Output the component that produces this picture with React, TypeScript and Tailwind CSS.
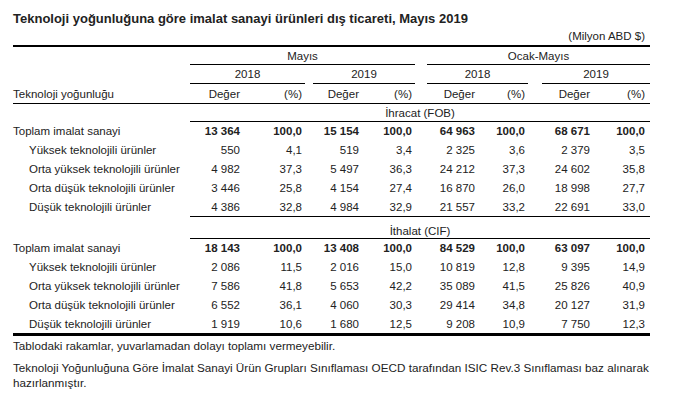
import React from "react";

type Row = { label: string; v: string[]; total?: boolean };

const ihracat: Row[] = [
  { label: "Toplam imalat sanayi", v: ["13 364", "100,0", "15 154", "100,0", "64 963", "100,0", "68 671", "100,0"], total: true },
  { label: "Yüksek teknolojili ürünler", v: ["550", "4,1", "519", "3,4", "2 325", "3,6", "2 379", "3,5"] },
  { label: "Orta yüksek teknolojili ürünler", v: ["4 982", "37,3", "5 497", "36,3", "24 212", "37,3", "24 602", "35,8"] },
  { label: "Orta düşük teknolojili ürünler", v: ["3 446", "25,8", "4 154", "27,4", "16 870", "26,0", "18 998", "27,7"] },
  { label: "Düşük teknolojili ürünler", v: ["4 386", "32,8", "4 984", "32,9", "21 557", "33,2", "22 691", "33,0"] },
];

const ithalat: Row[] = [
  { label: "Toplam imalat sanayi", v: ["18 143", "100,0", "13 408", "100,0", "84 529", "100,0", "63 097", "100,0"], total: true },
  { label: "Yüksek teknolojili ürünler", v: ["2 086", "11,5", "2 016", "15,0", "10 819", "12,8", "9 395", "14,9"] },
  { label: "Orta yüksek teknolojili ürünler", v: ["7 586", "41,8", "5 653", "42,2", "35 089", "41,5", "25 826", "40,9"] },
  { label: "Orta düşük teknolojili ürünler", v: ["6 552", "36,1", "4 060", "30,3", "29 414", "34,8", "20 127", "31,9"] },
  { label: "Düşük teknolojili ürünler", v: ["1 919", "10,6", "1 680", "12,5", "9 208", "10,9", "7 750", "12,3"] },
];

// sağ boşluklar, sütun sırasıyla
const pads = ["pr-[8px]", "pr-[3px]", "pr-[10px]", "pr-[3px]", "pr-[10px]", "pr-[3px]", "pr-[10px]", "pr-[5px]"];

const grid = "grid grid-cols-[177px_58px_57px_64px_46px_70px_43px_72px_50px]";

function DataRow({ r, first }: { r: Row; first?: boolean }) {
  return (
    <div className={`${grid} items-center ${first ? "h-[18px]" : "h-[19px]"}`}>
      <div className={r.total ? "" : "pl-[16px]"}>{r.label}</div>
      {r.v.map((x, i) => (
        <div key={i} className={`text-right ${pads[i]} ${r.total ? "font-bold" : ""}`}>
          {x}
        </div>
      ))}
    </div>
  );
}

export default function App() {
  return (
    <div className="w-[677px] h-[406px] bg-white text-[#222] font-['Liberation_Sans',Arial,sans-serif] text-[11.5px] leading-[14px] pt-[11px] pl-[13px]">
      <h1 className="font-bold text-[13px] leading-[15px] h-[14px]">
        Teknoloji yoğunluğuna göre imalat sanayi ürünleri dış ticareti, Mayıs 2019
      </h1>
      <div className="w-[637px]">
        <div className="mt-[4px] h-[14px] text-right pr-[5px]">(Milyon ABD $)</div>
        <div className="mt-[2px] h-[2px] bg-black" />

        <div className={`${grid} h-[18px]`}>
          <div />
          <div className="col-span-4 border-b border-black flex items-center justify-center">Mayıs</div>
          <div className="col-span-4 ml-[12px] border-b border-black flex items-center justify-center">Ocak-Mayıs</div>
        </div>
        <div className={`${grid} h-[19px]`}>
          <div />
          <div className="col-span-2 border-b border-black flex items-center justify-center">2018</div>
          <div className="col-span-2 ml-[8px] border-b border-black flex items-center justify-center">2019</div>
          <div className="col-span-2 ml-[12px] border-b border-black flex items-center justify-center">2018</div>
          <div className="col-span-2 ml-[14px] border-b border-black flex items-center justify-center">2019</div>
        </div>
        <div className={`${grid} h-[20px] items-end pb-[2px] border-b border-black`}>
          <div>Teknoloji yoğunluğu</div>
          {["Değer", "(%)", "Değer", "(%)", "Değer", "(%)", "Değer", "(%)"].map((x, i) => (
            <div key={i} className={`text-right ${pads[i]}`}>{x}</div>
          ))}
        </div>

        <div className={`${grid} h-[18px]`}>
          <div />
          <div className="col-span-8 border-b border-black flex items-center justify-center">İhracat (FOB)</div>
        </div>
        {ihracat.map((r, i) => (
          <DataRow key={i} r={r} first={i === 0} />
        ))}

        <div className={`${grid} h-[23px]`}>
          <div />
          <div className="col-span-8 border-t border-b border-black flex items-end justify-center">İthalat (CIF)</div>
        </div>
        {ithalat.map((r, i) => (
          <DataRow key={i} r={r} first={i === 0} />
        ))}
        <div className="h-[3px] bg-black" />

        <p className="mt-[2px] leading-[15px] text-[11.7px]">Tablodaki rakamlar, yuvarlamadan dolayı toplamı vermeyebilir.</p>
        <p className="mt-[7px] leading-[15px] text-[11.7px]">
          Teknoloji Yoğunluğuna Göre İmalat Sanayi Ürün Grupları Sınıflaması OECD tarafından ISIC Rev.3 Sınıflaması baz alınarak hazırlanmıştır.
        </p>
      </div>
    </div>
  );
}
